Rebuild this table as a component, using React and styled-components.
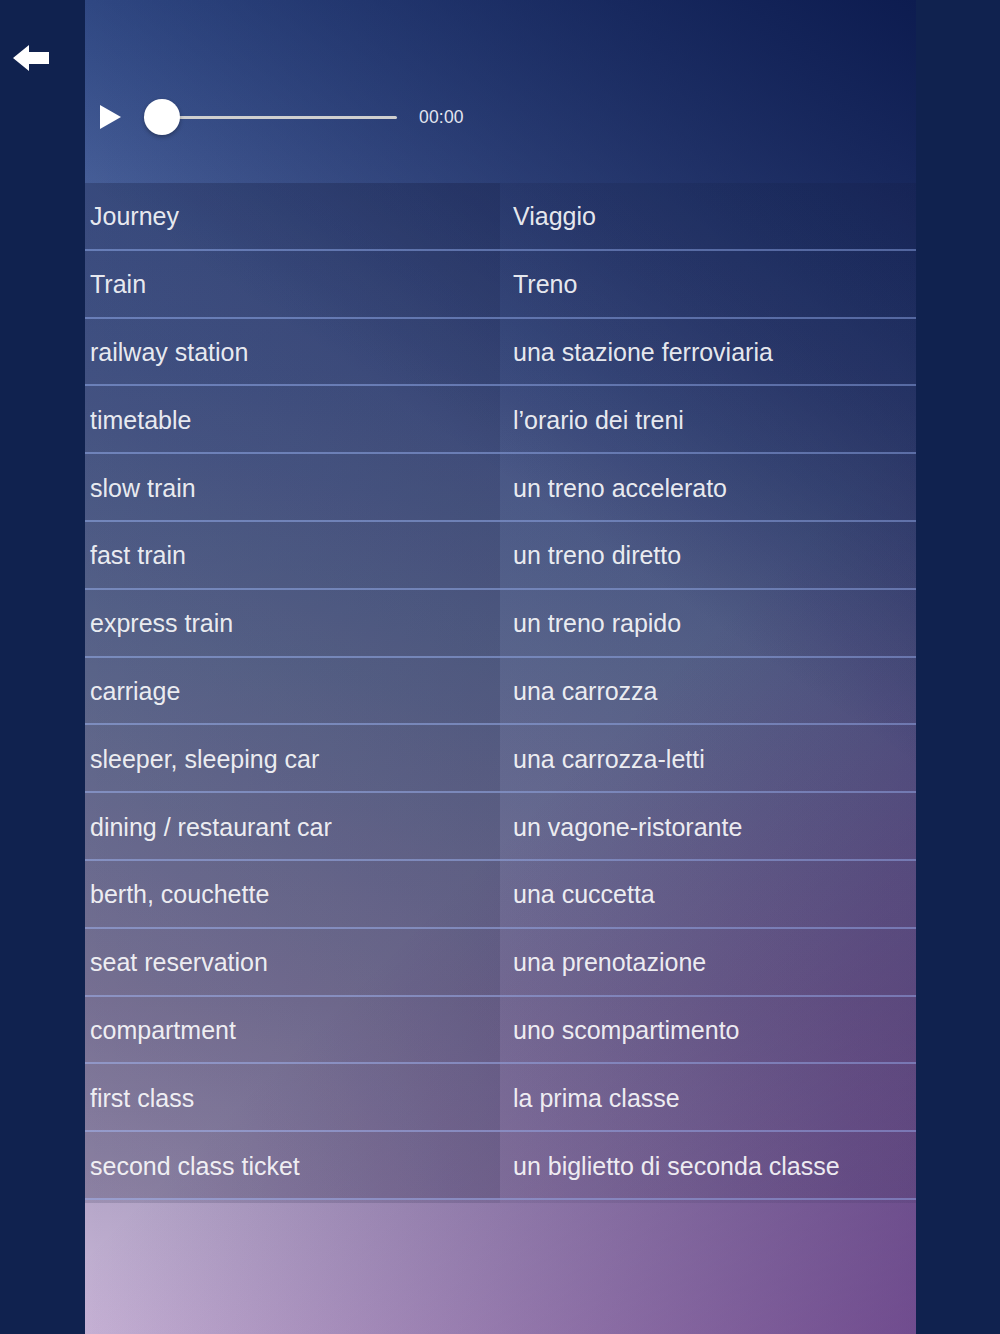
import React from "react"
import styled, { createGlobalStyle } from "styled-components"

const GlobalStyle = createGlobalStyle`
  html, body {
    margin: 0;
    padding: 0;
    background: #10224f;
  }
  * {
    box-sizing: border-box;
  }
`

const words = [
  ["Journey", "Viaggio"],
  ["Train", "Treno"],
  ["railway station", "una stazione ferroviaria"],
  ["timetable", "l’orario dei treni"],
  ["slow train", "un treno accelerato"],
  ["fast train", "un treno diretto"],
  ["express train", "un treno rapido"],
  ["carriage", "una carrozza"],
  ["sleeper, sleeping car", "una carrozza-letti"],
  ["dining / restaurant car", "un vagone-ristorante"],
  ["berth, couchette", "una cuccetta"],
  ["seat reservation", "una prenotazione"],
  ["compartment", "uno scompartimento"],
  ["first class", "la prima classe"],
  ["second class ticket", "un biglietto di seconda classe"],
]

const Page = styled.div`
  display: flex;
  width: 1000px;
  height: 1334px;
  overflow: hidden;
  background: #10224f;
  font-family: "Liberation Sans", Arial, sans-serif;
`

const SideBar = styled.div`
  width: ${p => p.$width}px;
  flex-shrink: 0;
  padding-top: 45px;
  padding-left: 13px;
`

const BackButton = styled.button`
  display: block;
  width: 36px;
  height: 26px;
  padding: 0;
  border: 0;
  background: none;
  cursor: pointer;
`

const Panel = styled.div`
  width: 831px;
  flex-shrink: 0;
  display: flex;
  flex-direction: column;
  background:
    linear-gradient(215deg, #0d1c50 0%, rgba(13, 28, 80, 0.6) 16%, rgba(13, 28, 80, 0) 40%),
    linear-gradient(315deg, rgba(75, 15, 110, 0.5) 0%, rgba(75, 15, 110, 0) 42%),
    linear-gradient(to right, rgba(15, 20, 70, 0) 0%, rgba(15, 20, 70, 0.28) 100%),
    linear-gradient(to bottom, #3a5592 0%, #52669c 28%, #727fa6 50%, #998fb3 75%, #cab7d8 100%);
`

const Header = styled.div`
  height: 183px;
  flex-shrink: 0;
  display: flex;
  align-items: center;
  padding: 51px 0 0 15px;
`

const PlayButton = styled.button`
  width: 21px;
  height: 24px;
  padding: 0;
  border: 0;
  background: none;
  cursor: pointer;
  display: flex;
`

const Slider = styled.div`
  position: relative;
  width: 253px;
  height: 36px;
  margin-left: 23px;
  display: flex;
  align-items: center;
`

const Track = styled.div`
  width: 100%;
  height: 3px;
  border-radius: 2px;
  background: #cfcfcf;
`

const Knob = styled.div`
  position: absolute;
  left: 0;
  top: 0;
  width: 36px;
  height: 36px;
  border-radius: 50%;
  background: #ffffff;
  box-shadow: 0 2px 4px rgba(0, 0, 0, 0.3);
`

const Time = styled.span`
  margin-left: 22px;
  font-size: 17.5px;
  color: #e4e6f0;
  letter-spacing: 0.2px;
`

const Table = styled.div`
  display: flex;
  flex-direction: column;
  padding-bottom: 3px;
  background: linear-gradient(to right, rgba(14, 20, 50, 0.15) 50%, rgba(14, 20, 50, 0.09) 50%);
`

const Row = styled.div`
  display: grid;
  grid-template-columns: 415px 416px;
  height: 67.8px;
  border-bottom: 2px solid rgba(150, 175, 240, 0.45);
`

const Cell = styled.div`
  display: flex;
  align-items: center;
  padding-left: ${p => (p.$side === "left" ? 5 : 13)}px;
  padding-top: 2px;
  font-size: 25px;
  color: rgba(255, 255, 255, 0.9);
  white-space: nowrap;
  background: ${p => (p.$side === "left" ? "rgba(14, 20, 50, 0.12)" : "rgba(14, 20, 50, 0.04)")};
`

const Footer = styled.div`
  flex: 1;
`

const BackArrow = () => (
  <svg width="36" height="26" viewBox="0 0 36 26">
    <polygon points="0,13 16,0 16,7 36,7 36,19 16,19 16,26" fill="#ffffff" />
  </svg>
)

const PlayIcon = () => (
  <svg width="21" height="24" viewBox="0 0 21 24">
    <polygon points="0,0 21,12 0,24" fill="#ffffff" />
  </svg>
)

export default function App() {
  return (
    <>
      <GlobalStyle />
      <Page>
        <SideBar $width={85}>
          <BackButton aria-label="Back">
            <BackArrow />
          </BackButton>
        </SideBar>
        <Panel>
          <Header>
            <PlayButton aria-label="Play">
              <PlayIcon />
            </PlayButton>
            <Slider>
              <Track />
              <Knob />
            </Slider>
            <Time>00:00</Time>
          </Header>
          <Table>
            {words.map(([en, it]) => (
              <Row key={en}>
                <Cell $side="left">{en}</Cell>
                <Cell $side="right">{it}</Cell>
              </Row>
            ))}
          </Table>
          <Footer />
        </Panel>
        <SideBar $width={84} />
      </Page>
    </>
  )
}
